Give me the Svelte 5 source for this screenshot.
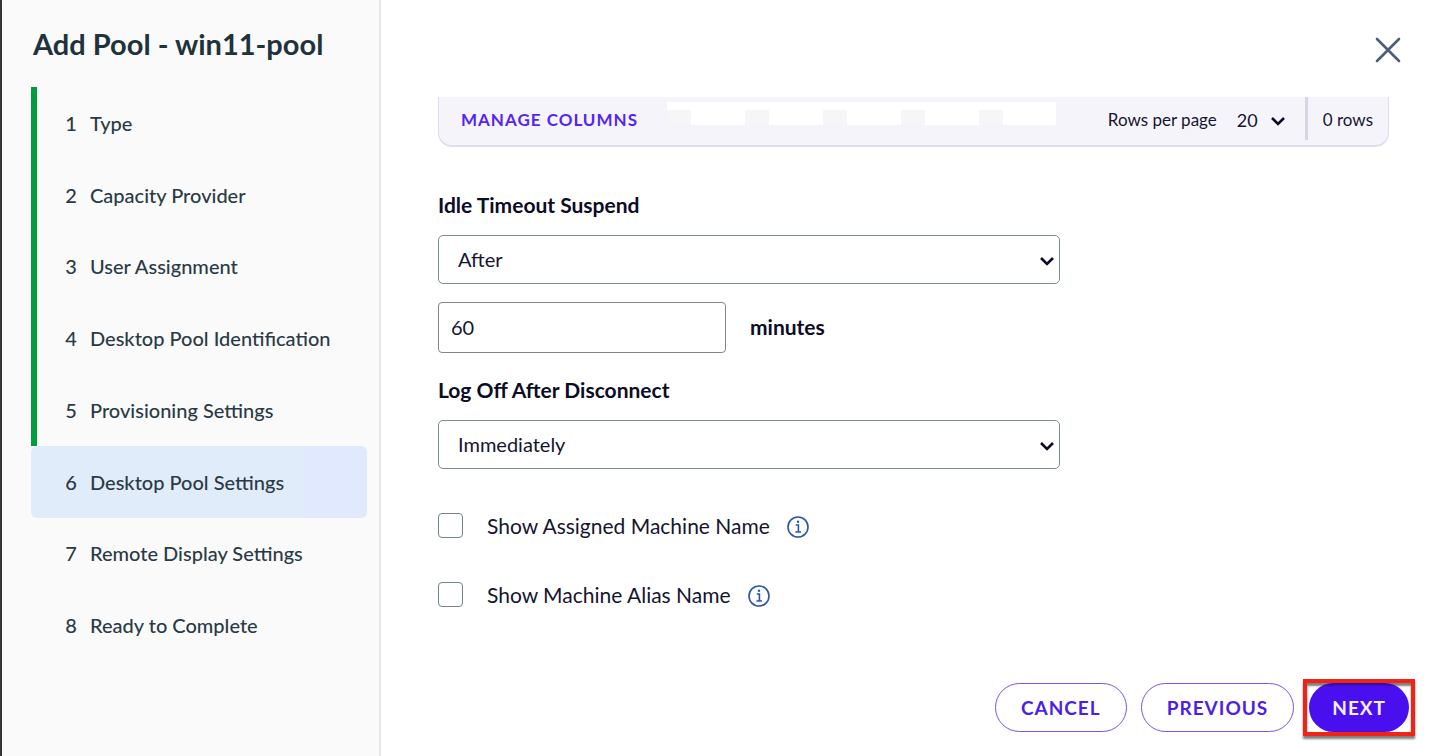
<script lang="ts">
	interface Option {
		id: string;
		label: string;
		checked: boolean;
	}

	const steps = [
		'Type',
		'Capacity Provider',
		'User Assignment',
		'Desktop Pool Identification',
		'Provisioning Settings',
		'Desktop Pool Settings',
		'Remote Display Settings',
		'Ready to Complete'
	];

	let current = $state(5);
	let rowsPerPage = $state('20');
	let idleMode = $state('After');
	let idleMinutes = $state('60');
	let logOff = $state('Immediately');
	let options: Option[] = $state([
		{ id: 'show-assigned', label: 'Show Assigned Machine Name', checked: false },
		{ id: 'show-alias', label: 'Show Machine Alias Name', checked: false }
	]);

	function go(step: number) {
		current = Math.max(0, Math.min(steps.length - 1, step));
	}
</script>

{#snippet chevron()}
	<svg class="chevron" viewBox="0 0 14 10" aria-hidden="true">
		<path d="M1 2 L7 8 L13 2" />
	</svg>
{/snippet}

<div class="wizard">
	<aside class="sidebar">
		<h1>Add Pool - win11-pool</h1>
		<ol class="steps">
			{#each steps as step, i}
				<li class:done={i < current} class:active={i === current}>
					<button type="button" aria-current={i === current ? 'step' : undefined} onclick={() => go(i)}>
						<span class="num">{i + 1}</span>
						<span>{step}</span>
					</button>
				</li>
			{/each}
		</ol>
	</aside>

	<main>
		<header>
			<button type="button" class="close" aria-label="Close">
				<svg viewBox="0 0 26 26" aria-hidden="true">
					<path d="M2 2 L24 24 M24 2 L2 24" />
				</svg>
			</button>
		</header>

		<div class="content">
			<div class="grid-footer">
				<button type="button" class="manage">MANAGE COLUMNS</button>
				<div class="blank" aria-hidden="true">
					{#each Array(5) as _}
						<span></span>
					{/each}
				</div>
				<div class="paging">
					<label for="rows">Rows per page</label>
					<div class="select-wrap rows">
						<select id="rows" bind:value={rowsPerPage}>
							<option>20</option>
							<option>50</option>
						</select>
						{@render chevron()}
					</div>
					<span class="divider"></span>
					<span>0 rows</span>
				</div>
			</div>

			<label class="title" for="idle">Idle Timeout Suspend</label>
			<div class="select-wrap field">
				<select id="idle" bind:value={idleMode}>
					<option>After</option>
					<option>Never</option>
				</select>
				{@render chevron()}
			</div>
			<div class="minutes">
				<input id="idle-minutes" type="text" inputmode="numeric" bind:value={idleMinutes} />
				<label for="idle-minutes">minutes</label>
			</div>

			<label class="title second" for="logoff">Log Off After Disconnect</label>
			<div class="select-wrap field">
				<select id="logoff" bind:value={logOff}>
					<option>Immediately</option>
					<option>Never</option>
					<option>After</option>
				</select>
				{@render chevron()}
			</div>

			<div class="options">
				{#each options as option (option.id)}
					<div class="option">
						<input type="checkbox" id={option.id} bind:checked={option.checked} />
						<label for={option.id}>{option.label}</label>
						<button type="button" class="info" aria-label="About {option.label}">
							<svg viewBox="0 0 22 22" aria-hidden="true">
								<circle cx="11" cy="11" r="10" />
								<path d="M8.8 9 H11.4 V16 M8.4 16 H14" />
								<circle class="dot" cx="11" cy="5.8" r="1.2" />
							</svg>
						</button>
					</div>
				{/each}
			</div>
		</div>

		<footer>
			<button type="button" class="pill">CANCEL</button>
			<button type="button" class="pill" onclick={() => go(current - 1)}>PREVIOUS</button>
			<div class="highlight">
				<button type="button" class="pill primary" onclick={() => go(current + 1)}>NEXT</button>
			</div>
		</footer>
	</main>
</div>

<style>
	:global(body) {
		background: #fff;
	}

	.wizard {
		display: flex;
		box-sizing: border-box;
		min-height: 100vh;
		border-left: 2px solid #343438;
		font-family: Lato, 'Liberation Sans', sans-serif;
		font-size: 20px;
		line-height: 24px;
		color: #15152f;
	}

	button,
	select,
	input {
		box-sizing: border-box;
		margin: 0;
		font: inherit;
		color: inherit;
	}

	button {
		padding: 0;
		border: 0;
		background: none;
		cursor: pointer;
	}

	.sidebar {
		box-sizing: border-box;
		flex: 0 0 379px;
		padding: 26px 12px 0 29px;
		border-right: 2px solid #e6e6e8;
		border-top-left-radius: 4px;
		background: #fafafa;
	}

	h1 {
		margin: 0 0 25px 2px;
		font-size: 29px;
		line-height: 36px;
		font-weight: 700;
		color: #1f333d;
	}

	.steps {
		display: grid;
		grid-template-rows: repeat(8, 1fr);
		min-height: 574px;
		margin: 0;
		padding: 0;
		list-style: none;
		color: #2a3a46;
	}

	.steps li {
		display: flex;
		border-left: 6px solid transparent;
	}

	.steps li.done {
		border-left-color: #009c3d;
	}

	.steps li.active {
		border-left-color: #e1ecfb;
		border-radius: 6px;
		background: linear-gradient(90deg, #e1ecfb 80%, #e1e9ff 82%);
	}

	.steps button {
		display: flex;
		flex: 1;
		align-items: center;
		padding-left: 28px;
		font-weight: 500;
		text-align: left;
		white-space: nowrap;
	}

	.num {
		width: 12px;
		margin-right: 13px;
		text-align: center;
	}

	main {
		display: flex;
		flex: 1;
		flex-direction: column;
		min-width: 0;
	}

	header {
		display: flex;
		justify-content: flex-end;
		height: 97px;
		padding-right: 31px;
	}

	.close {
		width: 26px;
		height: 26px;
		margin-top: 37px;
	}

	.close svg {
		display: block;
		fill: none;
		stroke: #4c5d7d;
		stroke-width: 2.6;
		stroke-linecap: round;
	}

	.content {
		flex: 1;
		padding: 0 43px 0 57px;
	}

	.grid-footer {
		display: flex;
		box-sizing: border-box;
		height: 50px;
		padding: 0 15px 2px 22px;
		border: 1px solid #dfdcec;
		border-top: 0;
		border-bottom-width: 2px;
		border-radius: 0 0 14px 14px;
		background: #f5f4fb;
		font-size: 17px;
	}

	.manage {
		width: 178px;
		font-weight: 700;
		letter-spacing: 1px;
		color: #5426f0;
		text-align: left;
		white-space: nowrap;
	}

	.blank {
		display: flex;
		box-sizing: border-box;
		gap: 54px;
		width: 389px;
		height: 23px;
		margin: 5px 0 0 28px;
		padding: 8px 0 0;
		background: #fff;
	}

	.blank span {
		width: 24px;
		background: #f6f6f9;
	}

	.paging {
		display: flex;
		align-items: center;
		margin-left: auto;
		white-space: nowrap;
	}

	.divider {
		align-self: flex-start;
		width: 3px;
		height: 43px;
		margin: 0 15px 0 20px;
		background: #d8d5e6;
	}

	.select-wrap {
		position: relative;
	}

	select {
		width: 100%;
		appearance: none;
		background: none;
	}

	.chevron {
		position: absolute;
		top: 50%;
		right: 6px;
		width: 14px;
		height: 10px;
		margin-top: -4px;
		fill: none;
		stroke: #0d0b26;
		stroke-width: 2.6;
		pointer-events: none;
	}

	.rows {
		width: 48px;
		margin-left: 20px;
	}

	.rows select {
		padding: 0;
		border: 0;
		font-size: 18px;
	}

	.rows .chevron {
		right: 0;
	}

	.title {
		display: block;
		margin: 46px 0 18px;
		font-size: 21px;
		font-weight: 700;
		color: #0c0c26;
	}

	.title.second {
		margin: 25px 0 18px;
	}

	.field {
		max-width: 622px;
	}

	.field select {
		display: block;
		height: 49px;
		padding: 0 19px 2px;
		border: 1px solid #7b8e94;
		border-radius: 5px;
	}

	.minutes {
		display: flex;
		align-items: center;
		gap: 24px;
		margin-top: 18px;
	}

	.minutes input {
		width: 288px;
		height: 51px;
		padding: 0 12px 2px;
		border: 1px solid #858585;
		border-radius: 4px;
		background: #fff;
	}

	.minutes label {
		padding-bottom: 2px;
		font-size: 21px;
		font-weight: 700;
		color: #0c0c26;
	}

	.options {
		display: grid;
		gap: 44px;
		margin-top: 44px;
		font-size: 21px;
	}

	.option {
		display: flex;
		align-items: center;
	}

	.option input {
		width: 25px;
		height: 25px;
		margin-right: 24px;
		appearance: none;
		border: 1px solid #6f858c;
		border-radius: 4px;
		background: #fff;
	}

	.option input:checked {
		background: #4a0fee;
	}

	.info {
		width: 22px;
		height: 22px;
		margin: 3px 0 0 17px;
	}

	.info svg {
		display: block;
		fill: none;
		stroke: #2a55a8;
		stroke-width: 1.6;
	}

	.info .dot {
		fill: #2a55a8;
		stroke: none;
	}

	footer {
		display: flex;
		align-items: center;
		justify-content: flex-end;
		padding: 0 17px 20px;
	}

	.pill {
		height: 49px;
		margin-right: 14px;
		padding: 0 25px;
		border: 1px solid #7a50f2;
		border-radius: 25px;
		font-size: 19px;
		font-weight: 700;
		letter-spacing: 1px;
		color: #4d1fe6;
	}

	.highlight {
		margin-left: -5px;
		padding: 0 2px;
		border: 4px solid #f02314;
		box-shadow:
			0 3px 2px rgba(0, 0, 0, 0.5),
			inset 0 3px 2px rgba(0, 0, 0, 0.5);
	}

	.primary {
		display: block;
		margin: 0;
		padding: 0 23px;
		border: 0;
		background: linear-gradient(#2a0a96, #4a0fee 4px);
		color: #f3efff;
	}
</style>
